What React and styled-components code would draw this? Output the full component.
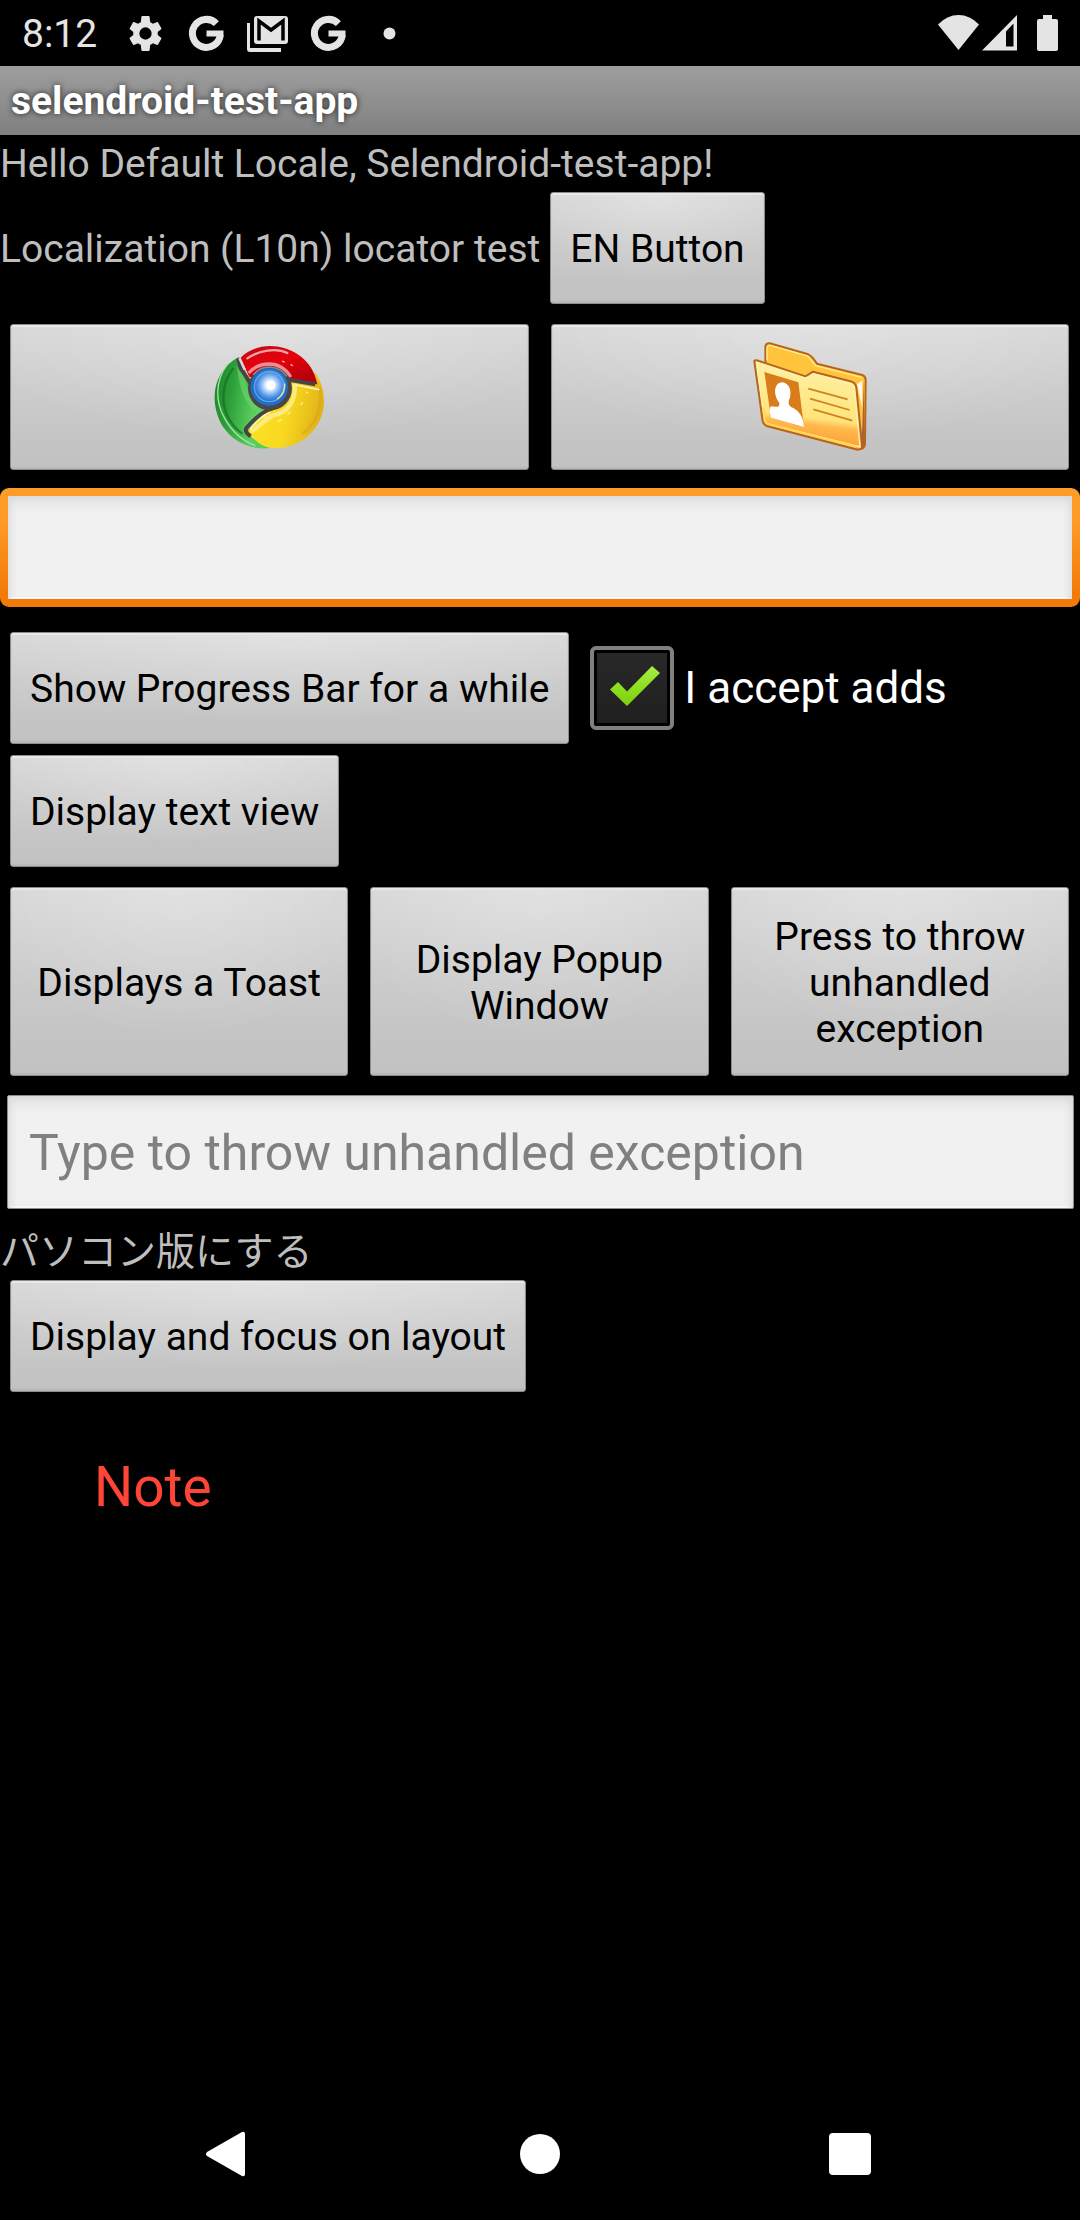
import React from 'react';
import styled, { createGlobalStyle } from 'styled-components';

const GlobalStyle = createGlobalStyle`
  * { box-sizing: border-box; }
  body { margin: 0; background: #000; }
`;

const Screen = styled.div`
  display: flex;
  flex-direction: column;
  min-height: 100vh;
  background: #000;
  color: #bebebe;
  font-family: Roboto, "Noto Sans CJK JP", sans-serif;
  font-size: 39px;
  line-height: 46px;
`;

const StatusBar = styled.header`
  display: flex;
  align-items: center;
  justify-content: space-between;
  height: 66px;
  padding: 0 22px;
  color: #e4e4e4;
`;

const StatusGroup = styled.div`
  display: flex;
  align-items: center;
  gap: ${(p) => p.$gap}px;
`;

const Clock = styled.time`
  margin-right: 8px;
  padding-top: 2px;
`;

const Glyph = styled.svg`
  display: block;
  flex: none;
  fill: currentColor;
`;

const TitleBar = styled.div`
  height: 69px;
  padding: 2px 11px 0;
  background: linear-gradient(#9e9e9e, #808080);
`;

const Title = styled.h1`
  margin: 0;
  color: #fff;
  font-size: 39px;
  font-weight: 700;
  line-height: 67px;
  text-shadow: 0 0 6px rgba(0, 0, 0, 0.75);
`;

const Content = styled.main`
  display: flex;
  flex: 1;
  flex-direction: column;
`;

const Text = styled.p`
  margin: ${(p) => p.$top || 0}px 0 0;
  padding-top: 2px;
  line-height: 55px;
`;

const Row = styled.div`
  display: flex;
  align-items: center;
  gap: 10px;
  margin-top: ${(p) => p.$top || 0}px;
  padding: 0 11px 0 ${(p) => (p.$flush ? 0 : 10)}px;
`;

const Columns = styled.div`
  display: grid;
  grid-template-columns: repeat(${(p) => p.$count}, 1fr);
  gap: 22px;
  margin-top: 20px;
  padding: 0 11px 0 10px;
`;

const Button = styled.button`
  display: flex;
  align-items: center;
  justify-content: center;
  min-height: ${(p) => p.$height || 112}px;
  padding: 2px 19px 0;
  border: 1px solid #8c8c8c;
  border-radius: 3px;
  background:
    radial-gradient(ellipse 60% 80% at 50% 0, rgba(255, 255, 255, 0.25), rgba(255, 255, 255, 0)),
    linear-gradient(#d8d8d8, #c4c4c4 80%, #c2c2c2);
  box-shadow: inset 0 2px 1px #e8e8e8, inset 0 -2px 2px #b8b8b8;
  color: #000;
  font: inherit;
  text-align: center;
`;

const Field = styled.input`
  display: block;
  height: 114px;
  margin: 19px 6px 0 7px;
  padding: 2px 21px 0;
  border: 1px solid #8c8c8c;
  border-radius: 2px;
  outline: none;
  background: #f1f1f1;
  box-shadow: inset 0 8px 14px -4px #d6d6d6, inset 6px 0 10px -6px #d6d6d6,
    inset -6px 0 10px -6px #d6d6d6, inset 0 -2px 0 #fff;
  color: #000;
  font-family: inherit;
  font-size: 50px;

  &::placeholder {
    color: #808080;
    opacity: 1;
  }
`;

const FocusedField = styled(Field)`
  height: 119px;
  margin: 18px 0 0;
  border: 8px solid transparent;
  border-radius: 9px;
  background:
    linear-gradient(#f1f1f1, #f1f1f1) padding-box,
    linear-gradient(#ff9c28 25%, #f27a06 90%) border-box;
`;

const CheckLabel = styled.label`
  display: flex;
  align-items: center;
  gap: 10px;
  margin-left: 11px;
  color: #fff;
  font-size: 44px;
`;

const CheckFrame = styled.span`
  display: grid;
  width: 84px;
  height: 84px;

  > * { grid-area: 1 / 1; }
  > svg { pointer-events: none; }
`;

const CheckBox = styled.input`
  appearance: none;
  width: 84px;
  height: 84px;
  margin: 0;
  border: 4px solid #808080;
  border-radius: 6px;
  background: linear-gradient(#282828, #202020) content-box;
  padding: 3px;

  &:not(:checked) + svg { visibility: hidden; }
`;

const Note = styled.p`
  margin: 63px 0 0 94px;
  color: #ff4438;
  font-size: 55px;
  line-height: 64px;
`;

const NavBar = styled.nav`
  display: grid;
  grid-template-columns: repeat(3, 1fr);
  height: 132px;
  padding: 0 75px;
`;

const NavButton = styled.button`
  display: grid;
  place-items: center;
  border: 0;
  background: none;
  color: #fff;
`;

const Spacer = styled.span`
  width: 14px;
`;

const GearIcon = () => (
  <Glyph width="41" height="41" viewBox="0 0 24 24" aria-hidden="true">
    <path d="M19.14 12.94c.04-.3.06-.61.06-.94 0-.32-.02-.64-.07-.94l2.03-1.58a.49.49 0 0 0 .12-.61l-1.92-3.32a.488.488 0 0 0-.59-.22l-2.39.96c-.5-.38-1.03-.7-1.62-.94L14.4 2.2a.484.484 0 0 0-.48-.41h-3.84c-.24 0-.43.17-.47.41l-.36 3.15c-.59.24-1.13.57-1.62.94l-2.39-.96c-.22-.08-.47 0-.59.22L2.74 8.87c-.12.21-.08.47.12.61l2.03 1.58c-.05.3-.09.63-.09.94s.02.64.07.94l-2.03 1.58a.49.49 0 0 0-.12.61l1.92 3.32c.12.22.37.29.59.22l2.39-.96c.5.38 1.03.7 1.62.94l.36 3.15c.05.24.24.41.48.41h3.84c.24 0 .44-.17.47-.41l.36-3.15c.59-.24 1.13-.56 1.62-.94l2.39.96c.22.08.47 0 .59-.22l1.92-3.32c.12-.22.07-.47-.12-.61l-2.01-1.58zM12 15.6A3.6 3.6 0 1 1 12 8.4a3.6 3.6 0 0 1 0 7.2z" />
  </Glyph>
);

const GoogleIcon = () => (
  <Glyph width="41" height="41" viewBox="0 0 41 41" aria-hidden="true">
    <path
      d="M30.400 10.600A14 14 0 1 0 34.300 22"
      fill="none"
      stroke="currentColor"
      strokeWidth="7"
    />
    <path d="M20.500 17.500H37.500V23.500H20.500z" />
  </Glyph>
);

const MailIcon = () => (
  <Glyph width="41" height="41" viewBox="0 0 41 41" aria-hidden="true">
    <path d="M0 10h3v25h31v4H3q-3 0-3-3z" />
    <rect x="7" y="3" width="34" height="28" rx="3" />
    <path d="M12 27.500V8L24 17L36 8V27.500" fill="none" stroke="#000" strokeWidth="3.500" />
  </Glyph>
);

const DotIcon = () => (
  <Glyph width="41" height="41" viewBox="0 0 41 41" aria-hidden="true">
    <circle cx="20.500" cy="20.500" r="6" />
  </Glyph>
);

const WifiIcon = () => (
  <Glyph width="41" height="36" viewBox="0 0 41 36" aria-hidden="true">
    <path d="M20.500 35L0 9.500Q9 0 20.500 0T41 9.500z" />
  </Glyph>
);

const SignalIcon = () => (
  <Glyph width="35" height="36" viewBox="0 0 35 36" aria-hidden="true">
    <path fillRule="evenodd" d="M35 0v35.500H0zM31.500 8.500l-7.500 8V31.500h7.500z" />
  </Glyph>
);

const BatteryIcon = () => (
  <Glyph width="21" height="36" viewBox="0 0 21 36" aria-hidden="true">
    <path d="M6 0h9v4h4q2 0 2 2v28q0 2-2 2H2q-2 0-2-2V6q0-2 2-2h4z" />
  </Glyph>
);

const ChromeIcon = () => (
  <Glyph width="120" height="120" viewBox="57 21 360 360" aria-hidden="true">
    <defs>
      <linearGradient id="chromeRed" x1="0" y1="0" x2="0.600" y2="1">
        <stop offset="0" stopColor="#c40a16" />
        <stop offset="0.500" stopColor="#e6000c" />
        <stop offset="1" stopColor="#b8000c" />
      </linearGradient>
      <linearGradient id="chromeGreen" x1="0" y1="0" x2="1" y2="0.200">
        <stop offset="0" stopColor="#1c8426" />
        <stop offset="0.300" stopColor="#2a9c38" />
        <stop offset="0.700" stopColor="#58cc5c" />
      </linearGradient>
      <linearGradient id="chromeYellow" x1="0" y1="0.300" x2="1" y2="0.500">
        <stop offset="0" stopColor="#ffe428" />
        <stop offset="0.550" stopColor="#f8d820" />
        <stop offset="1" stopColor="#e0b018" />
      </linearGradient>
      <radialGradient id="chromeBlue" cx="0.520" cy="0.450" r="0.550">
        <stop offset="0" stopColor="#fff" />
        <stop offset="0.220" stopColor="#e4f0ff" />
        <stop offset="0.550" stopColor="#5c9cec" />
        <stop offset="0.800" stopColor="#1c6cc8" />
        <stop offset="1" stopColor="#2470cc" />
      </radialGradient>
    </defs>
    <path d="M146 78C70 118 54 210 98 286C130 334 180 356 236 352L260 240L180 150z" fill="url(#chromeGreen)" />
    <path d="M376 125C418 188 410 272 346 322C304 354 240 362 206 336L170 306L240 230L300 150z" fill="url(#chromeYellow)" />
    <path d="M152 80C196 36 270 34 326 72C358 94 374 122 382 160L300 146L178 138z" fill="url(#chromeRed)" />
    <path d="M112 100C74 150 76 214 104 262C126 302 160 330 196 344" fill="none" stroke="#a8e0a8" strokeWidth="4" />
    <path d="M130 112C94 158 92 220 116 262C128 284 142 298 158 308" fill="none" stroke="#14701e" strokeWidth="7" opacity=".7" />
    <path d="M150 108C158 172 170 218 216 240L164 296" fill="none" stroke="#68d468" strokeWidth="18" opacity=".65" />
    <path d="M172 82C206 58 260 50 292 66" fill="none" stroke="#f4a4a8" strokeWidth="7" strokeLinecap="round" />
    <path d="M176 126C204 94 268 82 302 138" fill="none" stroke="#f08c94" strokeWidth="10" />
    <path d="M314 158C318 210 294 246 246 254L184 302" fill="none" stroke="#fff0a0" strokeWidth="13" opacity=".75" />
    <path d="M388 170C400 230 376 280 338 308" fill="none" stroke="#d8a418" strokeWidth="9" opacity=".55" />
    <path d="M144 82L152 112L182 158M296 146L376 160M248 232C220 240 190 266 168 292Q164 304 182 316" fill="none" stroke="#484444" strokeWidth="12" strokeLinejoin="round" />
    <path d="M148 82L164 116" stroke="#d8d8d8" strokeWidth="7" />
    <path d="M318 162L388 176M240 244C216 254 192 278 180 296" fill="none" stroke="#fff4b8" strokeWidth="5" />
    <circle cx="240" cy="172" r="66" fill="#484848" />
    <path d="M190 132A62 62 0 0 1 290 136" fill="none" stroke="#88888c" strokeWidth="5" />
    <circle cx="238" cy="168" r="56" fill="url(#chromeBlue)" />
    <circle cx="238" cy="167" r="45" fill="none" stroke="#7cb4f4" strokeWidth="4" opacity=".75" />
    <path d="M284 158Q286 188 262 204" fill="none" stroke="#e0dca0" strokeWidth="5" />
    <circle cx="243" cy="163" r="13" fill="#fff" />
    <path d="M220 262l10-5M264 272l12-8M292 250l10-7M332 222l7-8M348 182l6 5M276 90l8 4M302 100l6 5" stroke="#fff8c0" strokeWidth="4" opacity=".75" />
  </Glyph>
);

const FolderIcon = () => (
  <Glyph width="120" height="120" viewBox="57 21 360 360" aria-hidden="true">
    <defs>
      <linearGradient id="folderFront" x1="0" y1="0" x2="-0.150" y2="1">
        <stop offset="0" stopColor="#fff0a0" />
        <stop offset="0.550" stopColor="#ffe47c" />
        <stop offset="0.630" stopColor="#ffb84c" />
        <stop offset="0.850" stopColor="#ff9c34" />
        <stop offset="1" stopColor="#ffd858" />
      </linearGradient>
    </defs>
    <path d="M103 48Q104 36 116 37L232 70Q242 74 258 98L394 132Q404 136 404 148L402 340Q400 354 384 354L104 270z" fill="#ffc43c" stroke="#b8661c" strokeWidth="6" strokeLinejoin="round" />
    <path d="M108 88V52Q110 42 118 43L230 75L254 104L392 139" fill="none" stroke="#ffec90" strokeWidth="4" />
    <path d="M378 160L394 148V232z" fill="#fff8e0" />
    <path d="M398 146L401 340Q400 352 386 355L394 290z" fill="#a86434" />
    <path d="M70 90Q74 86 84 90L224 136L246 122L358 151Q374 155 376 170L393 342Q393 356 380 356L110 286Q98 282 95 270z" fill="url(#folderFront)" stroke="#b86420" strokeWidth="6" strokeLinejoin="round" />
    <path d="M77 95L222 142L248 129L356 157Q368 160 370 174L387 348L112 279Q102 276 101 268z" fill="none" stroke="#fff0b0" strokeWidth="4" />
    <path d="M96 230L102 266Q104 277 114 280L376 348" fill="none" stroke="#ffd850" strokeWidth="6" />
    <path d="M100 123L202 154L219 288L120 260z" fill="#d87c1c" />
    <path d="M155 154C175 158 182 178 177 200C169 216 174 222 180 228Q216 242 219 288L120 260Q112 232 120 226C137 227 146 232 145 216C126 192 128 154 155 154z" fill="#fff" />
    <path d="M232 173L350 205M237 203L356 237M247 235L364 269" fill="none" stroke="#d0841c" strokeWidth="5" />
  </Glyph>
);

const CheckIcon = () => (
  <Glyph width="84" height="84" viewBox="0 0 84 84" aria-hidden="true">
    <defs>
      <linearGradient id="checkGreen" x1="0" y1="0" x2="0" y2="1">
        <stop offset="0" stopColor="#a8ec48" />
        <stop offset="0.500" stopColor="#8ee020" />
        <stop offset="1" stopColor="#7cd010" />
      </linearGradient>
    </defs>
    <path d="M20 43.500L28 36L37 45.500L62 20L70 27L37 60z" fill="url(#checkGreen)" />
  </Glyph>
);

export default function App() {
  return (
    <Screen>
      <GlobalStyle />
      <StatusBar>
        <StatusGroup $gap={20}>
          <Clock>8:12</Clock>
          <GearIcon />
          <GoogleIcon />
          <MailIcon />
          <GoogleIcon />
          <DotIcon />
        </StatusGroup>
        <StatusGroup $gap={3}>
          <WifiIcon />
          <SignalIcon />
          <Spacer />
          <BatteryIcon />
        </StatusGroup>
      </StatusBar>
      <TitleBar>
        <Title>selendroid-test-app</Title>
      </TitleBar>
      <Content>
        <Text>Hello Default Locale, Selendroid-test-app!</Text>
        <Row $flush>
          <Text>Localization (L10n) locator test</Text>
          <Button type="button">EN Button</Button>
        </Row>
        <Columns $count={2}>
          <Button type="button" $height={146} aria-label="Chrome">
            <ChromeIcon />
          </Button>
          <Button type="button" $height={146} aria-label="Contacts">
            <FolderIcon />
          </Button>
        </Columns>
        <FocusedField type="text" aria-label="Text" />
        <Row $top={25}>
          <Button type="button">Show Progress Bar for a while</Button>
          <CheckLabel>
            <CheckFrame>
              <CheckBox type="checkbox" defaultChecked />
              <CheckIcon />
            </CheckFrame>
            I accept adds
          </CheckLabel>
        </Row>
        <Row $top={11}>
          <Button type="button">Display text view</Button>
        </Row>
        <Columns $count={3}>
          <Button type="button" $height={189}>Displays a Toast</Button>
          <Button type="button" $height={189}>Display Popup Window</Button>
          <Button type="button" $height={189}>Press to throw unhandled exception</Button>
        </Columns>
        <Field
          type="text"
          placeholder="Type to throw unhandled exception"
          aria-label="Type to throw unhandled exception"
        />
        <Text $top={14} lang="ja">パソコン版にする</Text>
        <Row>
          <Button type="button">Display and focus on layout</Button>
        </Row>
        <Note>Note</Note>
      </Content>
      <NavBar>
        <NavButton type="button" aria-label="Back">
          <Glyph width="48" height="48" viewBox="0 0 48 48">
            <path d="M1 22L36 2Q39 1 39 4V44Q39 47 36 46L1 26Q-1 24 1 22z" />
          </Glyph>
        </NavButton>
        <NavButton type="button" aria-label="Home">
          <Glyph width="42" height="42" viewBox="0 0 42 42">
            <circle cx="21" cy="21" r="20" />
          </Glyph>
        </NavButton>
        <NavButton type="button" aria-label="Recent apps">
          <Glyph width="42" height="42" viewBox="0 0 42 42">
            <rect width="42" height="42" rx="4" />
          </Glyph>
        </NavButton>
      </NavBar>
    </Screen>
  );
}
